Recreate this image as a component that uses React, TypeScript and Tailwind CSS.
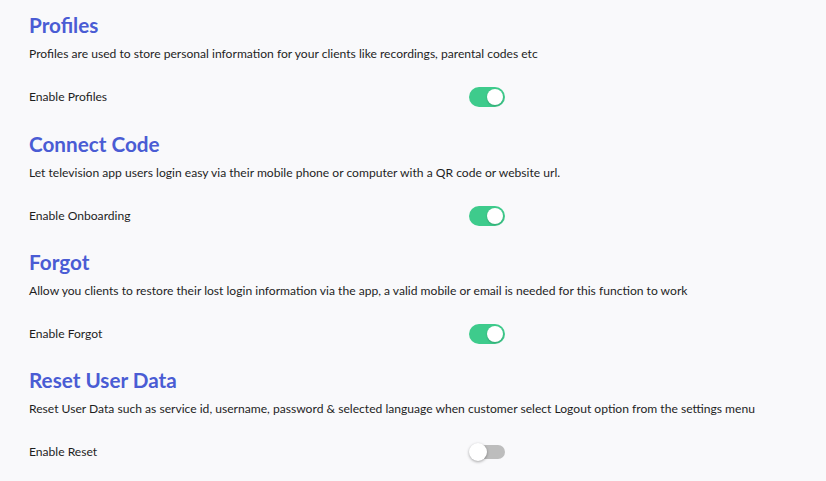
import React from "react";

const sections = [
  {
    title: "Profiles",
    desc: "Profiles are used to store personal information for your clients like recordings, parental codes etc",
    label: "Enable Profiles",
    on: true,
  },
  {
    title: "Connect Code",
    desc: "Let television app users login easy via their mobile phone or computer with a QR code or website url.",
    label: "Enable Onboarding",
    on: true,
  },
  {
    title: "Forgot",
    desc: "Allow you clients to restore their lost login information via the app, a valid mobile or email is needed for this function to work",
    label: "Enable Forgot",
    on: true,
  },
  {
    title: "Reset User Data",
    desc: "Reset User Data such as service id, username, password & selected language when customer select Logout option from the settings menu",
    label: "Enable Reset",
    on: false,
  },
];

function Toggle({ on }: { on: boolean }) {
  if (on) {
    return (
      <div className="w-[36px] h-[20px] rounded-full bg-[#3ecb8c] flex items-center justify-end pr-[2px]">
        <div className="w-[16px] h-[16px] rounded-full bg-white shadow-[0_1px_2px_rgba(0,0,0,0.2)]" />
      </div>
    );
  }
  return (
    <div className="relative w-[36px] h-[20px] flex items-center">
      <div className="w-[34px] h-[14px] ml-[2px] rounded-full bg-[#bdbdbd]" />
      <div className="absolute left-0 top-[1px] w-[18px] h-[18px] rounded-full bg-white shadow-[0_1px_3px_rgba(0,0,0,0.35)]" />
    </div>
  );
}

export default function App() {
  return (
    <div
      className="w-[826px] h-[481px] bg-[#f9f9fb] text-[#1e1e1e] pl-[29px] pt-[11px] overflow-hidden"
      style={{ fontFamily: "Lato, 'Open Sans', sans-serif" }}
    >
      {sections.map((s, i) => (
        <div key={s.title} className={i === 0 ? "h-[119px]" : "h-[118px]"}>
          <h2 className="text-[20.7px] leading-[28px] font-bold text-[#4a5cd4]">{s.title}</h2>
          <p className="text-[12.1px] leading-[16px] mt-[7px]">{s.desc}</p>
          <div className="flex items-center w-[476px] justify-between mt-[25px] h-[20px]">
            <span className="text-[12.1px]">{s.label}</span>
            <Toggle on={s.on} />
          </div>
        </div>
      ))}
    </div>
  );
}
